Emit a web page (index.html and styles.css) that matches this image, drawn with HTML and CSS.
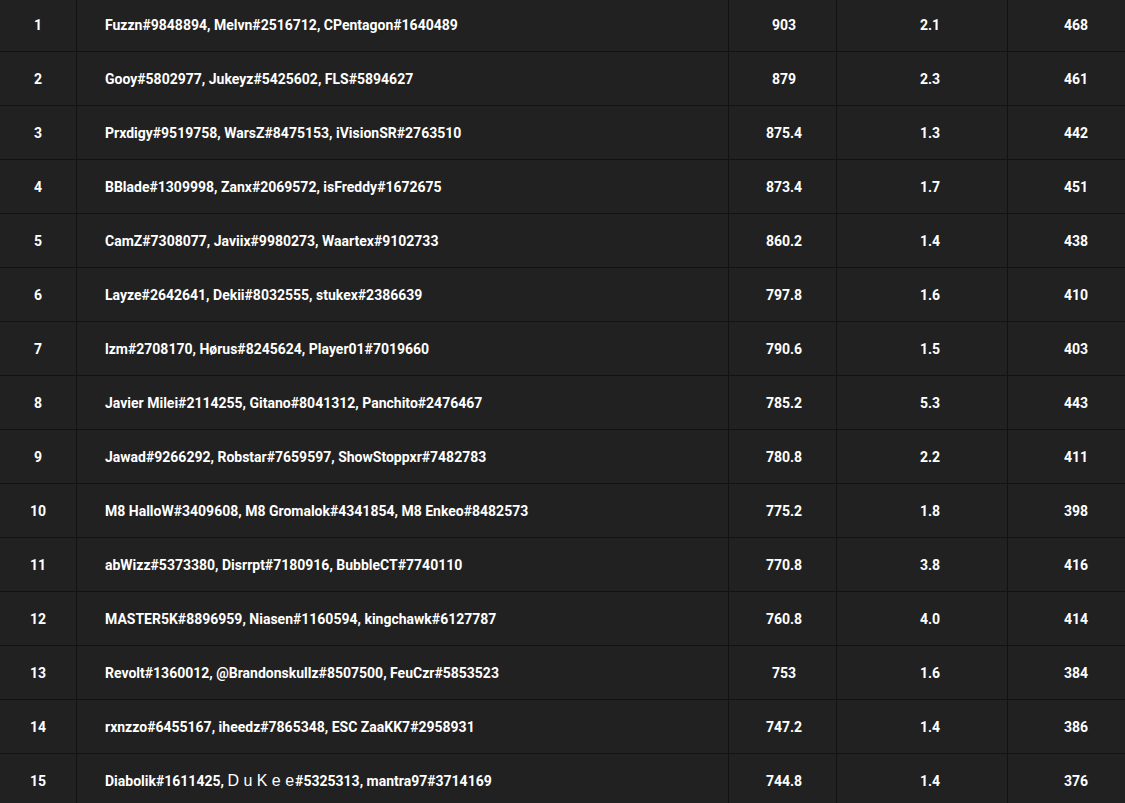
FILE: index.html
```html
<!DOCTYPE html>
<html>
<head>
<meta charset="utf-8">
<link rel="stylesheet" href="styles.css">
</head>
<body>
<div class="board">
  <div class="row"><div class="c rank">1</div><div class="c names"><span>Fuzzn#9848894, Melvn#2516712, CPentagon#1640489</span></div><div class="c n3">903</div><div class="c n4">2.1</div><div class="c n5">468</div></div>
  <div class="row"><div class="c rank">2</div><div class="c names"><span>Gooy#5802977, Jukeyz#5425602, FLS#5894627</span></div><div class="c n3">879</div><div class="c n4">2.3</div><div class="c n5">461</div></div>
  <div class="row"><div class="c rank">3</div><div class="c names"><span>Prxdigy#9519758, WarsZ#8475153, iVisionSR#2763510</span></div><div class="c n3">875.4</div><div class="c n4">1.3</div><div class="c n5">442</div></div>
  <div class="row"><div class="c rank">4</div><div class="c names"><span>BBlade#1309998, Zanx#2069572, isFreddy#1672675</span></div><div class="c n3">873.4</div><div class="c n4">1.7</div><div class="c n5">451</div></div>
  <div class="row"><div class="c rank">5</div><div class="c names"><span>CamZ#7308077, Javiix#9980273, Waartex#9102733</span></div><div class="c n3">860.2</div><div class="c n4">1.4</div><div class="c n5">438</div></div>
  <div class="row"><div class="c rank">6</div><div class="c names"><span>Layze#2642641, Dekii#8032555, stukex#2386639</span></div><div class="c n3">797.8</div><div class="c n4">1.6</div><div class="c n5">410</div></div>
  <div class="row"><div class="c rank">7</div><div class="c names"><span>lzm#2708170, Hørus#8245624, Player01#7019660</span></div><div class="c n3">790.6</div><div class="c n4">1.5</div><div class="c n5">403</div></div>
  <div class="row"><div class="c rank">8</div><div class="c names"><span>Javier Milei#2114255, Gitano#8041312, Panchito#2476467</span></div><div class="c n3">785.2</div><div class="c n4">5.3</div><div class="c n5">443</div></div>
  <div class="row"><div class="c rank">9</div><div class="c names"><span>Jawad#9266292, Robstar#7659597, ShowStoppxr#7482783</span></div><div class="c n3">780.8</div><div class="c n4">2.2</div><div class="c n5">411</div></div>
  <div class="row"><div class="c rank">10</div><div class="c names"><span>M8 HalloW#3409608, M8 Gromalok#4341854, M8 Enkeo#8482573</span></div><div class="c n3">775.2</div><div class="c n4">1.8</div><div class="c n5">398</div></div>
  <div class="row"><div class="c rank">11</div><div class="c names"><span>abWizz#5373380, Disrrpt#7180916, BubbleCT#7740110</span></div><div class="c n3">770.8</div><div class="c n4">3.8</div><div class="c n5">416</div></div>
  <div class="row"><div class="c rank">12</div><div class="c names"><span>MASTER5K#8896959, Niasen#1160594, kingchawk#6127787</span></div><div class="c n3">760.8</div><div class="c n4">4.0</div><div class="c n5">414</div></div>
  <div class="row"><div class="c rank">13</div><div class="c names"><span>Revolt#1360012, @Brandonskullz#8507500, FeuCzr#5853523</span></div><div class="c n3">753</div><div class="c n4">1.6</div><div class="c n5">384</div></div>
  <div class="row"><div class="c rank">14</div><div class="c names"><span>rxnzzo#6455167, iheedz#7865348, ESC ZaaKK7#2958931</span></div><div class="c n3">747.2</div><div class="c n4">1.4</div><div class="c n5">386</div></div>
  <div class="row"><div class="c rank">15</div><div class="c names"><span>Diabolik#1611425, <span class="fancy">D u K e e</span>#5325313, mantra97#3714169</span></div><div class="c n3">744.8</div><div class="c n4">1.4</div><div class="c n5">376</div></div>
</div>
</body>
</html>
```

FILE: styles.css
```css
html, body {
  margin: 0;
  padding: 0;
  background: #212121;
  overflow: hidden;
}
body {
  font-family: Roboto, "Liberation Sans", sans-serif;
  font-size: 14px;
  font-weight: 700;
  color: #ffffff;
}
.board {
  margin-top: -2px;
}
.row {
  display: grid;
  grid-template-columns: 77px 652px 108px 171px 117px;
  height: 54px;
  box-sizing: border-box;
  border-bottom: 1px solid #121212;
}
.c {
  box-sizing: border-box;
  display: flex;
  align-items: center;
  border-right: 1px solid #121212;
  white-space: nowrap;
}
.c:last-child {
  border-right: none;
}
.rank {
  justify-content: center;
}
.names {
  padding-left: 28px;
}
.n3 {
  justify-content: center;
  padding-left: 3px;
}
.n4 {
  justify-content: center;
  padding-left: 16px;
}
.n5 {
  justify-content: center;
  padding-left: 19px;
}
.fancy {
  font-family: "Liberation Sans", Arial, sans-serif;
  font-weight: 400;
  font-size: 16px;
  margin-right: 1px;
}
```
